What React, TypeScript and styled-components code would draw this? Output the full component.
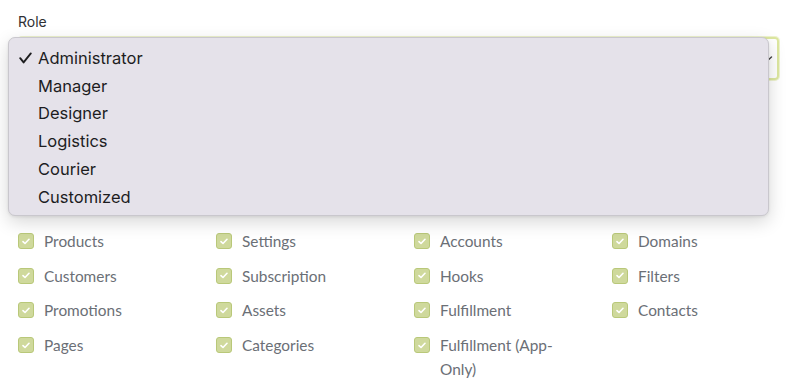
import React from "react";
import styled, { createGlobalStyle } from "styled-components";

const Global = createGlobalStyle`
  html, body { margin: 0; padding: 0; background: #ffffff; }
  body { width: 800px; height: 389px; overflow: hidden; }
`;

const Page = styled.div`
  position: relative;
  width: 800px;
  height: 389px;
  padding: 13px 21px 0 18px;
  box-sizing: border-box;
  font-family: Lato, "Liberation Sans", sans-serif;
`;

const Label = styled.div`
  font-family: Inter, "Liberation Sans", sans-serif;
  font-size: 14px;
  line-height: 18px;
  color: #2f3033;
  height: 18px;
`;

const SelectBox = styled.div`
  margin-top: 6px;
  height: 43px;
  box-sizing: border-box;
  border: 2px solid #dde7a0;
  border-radius: 4px;
  box-shadow: 0 0 0 1px #eef3cf;
  display: flex;
  align-items: center;
  justify-content: flex-end;
  padding-right: 4px;
`;

const PermGrid = styled.div`
  margin-top: 149px;
  display: grid;
  grid-template-columns: repeat(4, 198px);
  row-gap: 10.7px;
`;

const Item = styled.div`
  display: flex;
  align-items: flex-start;
  gap: 10px;
  width: 150px;
`;

const Box = styled.span`
  flex: none;
  width: 16px;
  height: 16px;
  margin-top: 4px;
  box-sizing: border-box;
  border: 1px solid #b9c879;
  border-radius: 3px;
  background: #cfd99c;
  display: flex;
  align-items: center;
  justify-content: center;
`;

const ItemText = styled.span`
  font-size: 15.4px;
  line-height: 24px;
  color: #6b6f76;
`;

const Menu = styled.div`
  position: absolute;
  left: 8px;
  top: 37px;
  width: 761px;
  height: 179px;
  box-sizing: border-box;
  padding-top: 6px;
  background: #e5e2ea;
  border: 1px solid #c9c7cd;
  border-radius: 7px;
  box-shadow: 0 6px 18px rgba(0, 0, 0, 0.16), 0 1px 3px rgba(0, 0, 0, 0.08);
  font-family: Inter, "Liberation Sans", sans-serif;
`;

const Option = styled.div`
  display: flex;
  align-items: center;
  height: 27.8px;
  padding-left: 10px;
  font-size: 16.5px;
  color: #1d1d1f;
`;

const CheckSlot = styled.span`
  width: 19px;
  display: flex;
  align-items: center;
`;

const roles = ["Administrator", "Manager", "Designer", "Logistics", "Courier", "Customized"];
const perms = [
  "Products", "Settings", "Accounts", "Domains",
  "Customers", "Subscription", "Hooks", "Filters",
  "Promotions", "Assets", "Fulfillment", "Contacts",
  "Pages", "Categories", "Fulfillment (App-Only)", null,
];

const SmallCheck = () => (
  <svg width="8" height="7" viewBox="0 0 8 7">
    <polyline points="1,3.6 3,5.5 7,1.3" fill="none" stroke="#ffffff" strokeWidth="1.6" strokeLinecap="round" strokeLinejoin="round" />
  </svg>
);

const MenuCheck = () => (
  <svg width="13" height="12" viewBox="0 0 13 12">
    <polyline points="1.2,6.2 4.6,10.4 11.8,1.4" fill="none" stroke="#1d1d1f" strokeWidth="1.9" strokeLinecap="round" strokeLinejoin="round" />
  </svg>
);

export default function App() {
  return (
    <Page>
      <Global />
      <Label>Role</Label>
      <SelectBox>
        <svg width="12" height="8" viewBox="0 0 12 8">
          <polyline points="1.5,2 6,6 10.5,2" fill="none" stroke="#444" strokeWidth="1.4" strokeLinecap="round" />
        </svg>
      </SelectBox>
      <PermGrid>
        {perms.map((p, i) =>
          p ? (
            <Item key={i}>
              <Box><SmallCheck /></Box>
              <ItemText>{p}</ItemText>
            </Item>
          ) : (
            <div key={i} />
          )
        )}
      </PermGrid>
      <Menu>
        {roles.map((r, i) => (
          <Option key={r}>
            <CheckSlot>{i === 0 ? <MenuCheck /> : null}</CheckSlot>
            {r}
          </Option>
        ))}
      </Menu>
    </Page>
  );
}
